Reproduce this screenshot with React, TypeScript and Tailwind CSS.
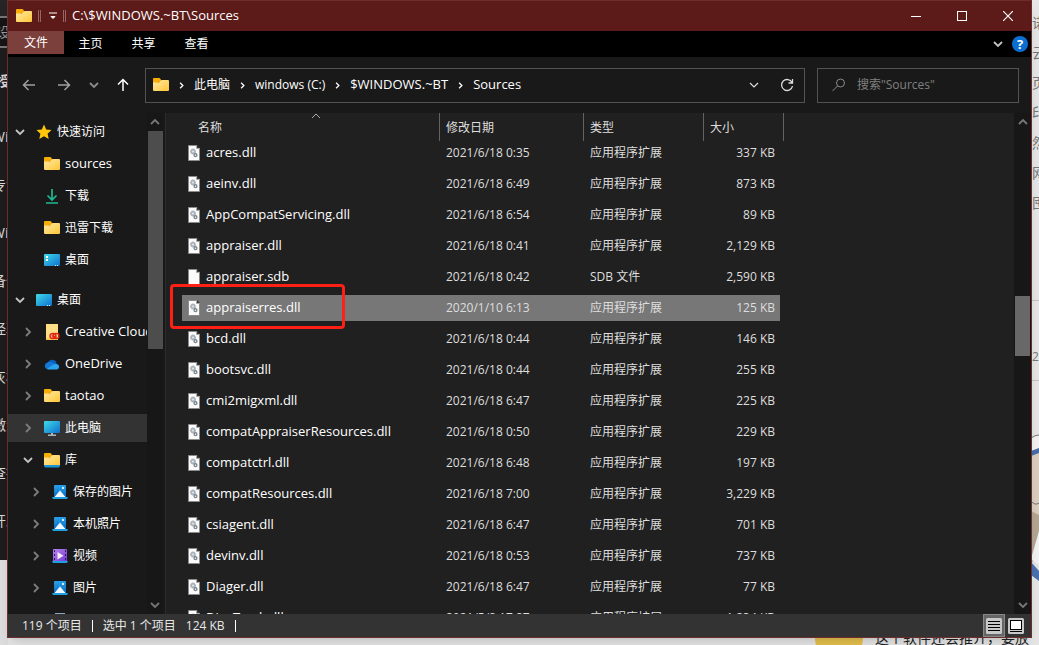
import React from 'react';

type FileRow = { name: string; date: string; type: string; size: string; selected?: boolean };

const DLL = '应用程序扩展';

const FILES: FileRow[] = [
  { name: 'acres.dll', date: '2021/6/18 0:35', type: DLL, size: '337 KB' },
  { name: 'aeinv.dll', date: '2021/6/18 6:49', type: DLL, size: '873 KB' },
  { name: 'AppCompatServicing.dll', date: '2021/6/18 6:54', type: DLL, size: '89 KB' },
  { name: 'appraiser.dll', date: '2021/6/18 0:41', type: DLL, size: '2,129 KB' },
  { name: 'appraiser.sdb', date: '2021/6/18 0:42', type: 'SDB 文件', size: '2,590 KB' },
  { name: 'appraiserres.dll', date: '2020/1/10 6:13', type: DLL, size: '125 KB', selected: true },
  { name: 'bcd.dll', date: '2021/6/18 0:44', type: DLL, size: '146 KB' },
  { name: 'bootsvc.dll', date: '2021/6/18 0:44', type: DLL, size: '255 KB' },
  { name: 'cmi2migxml.dll', date: '2021/6/18 6:47', type: DLL, size: '225 KB' },
  { name: 'compatAppraiserResources.dll', date: '2021/6/18 0:50', type: DLL, size: '229 KB' },
  { name: 'compatctrl.dll', date: '2021/6/18 6:48', type: DLL, size: '197 KB' },
  { name: 'compatResources.dll', date: '2021/6/18 7:00', type: DLL, size: '3,229 KB' },
  { name: 'csiagent.dll', date: '2021/6/18 6:47', type: DLL, size: '701 KB' },
  { name: 'devinv.dll', date: '2021/6/18 0:53', type: DLL, size: '737 KB' },
  { name: 'Diager.dll', date: '2021/6/18 6:47', type: DLL, size: '77 KB' },
  { name: 'DiagTrack.dll', date: '2021/5/8 17:27', type: DLL, size: '1,234 KB' },
];

type Kind = 'star' | 'folder' | 'download' | 'desktop' | 'desktop2' | 'cc' | 'onedrive' | 'pc' | 'library' | 'picture' | 'video' | 'doc';
type NavItem = { label: string; icon: Kind; level: 0 | 1 | 2; arrow?: 'open' | 'closed'; selected?: boolean; latin?: boolean };

const QUICK: NavItem[] = [
  { label: '快速访问', icon: 'star', level: 0, arrow: 'open' },
  { label: 'sources', icon: 'folder', level: 1, latin: true },
  { label: '下载', icon: 'download', level: 1 },
  { label: '迅雷下载', icon: 'folder', level: 1 },
  { label: '桌面', icon: 'desktop', level: 1 },
];

const TREE: NavItem[] = [
  { label: '桌面', icon: 'desktop2', level: 0, arrow: 'open' },
  { label: 'Creative Cloud Files', icon: 'cc', level: 1, arrow: 'closed', latin: true },
  { label: 'OneDrive', icon: 'onedrive', level: 1, arrow: 'closed', latin: true },
  { label: 'taotao', icon: 'folder', level: 1, arrow: 'closed', latin: true },
  { label: '此电脑', icon: 'pc', level: 1, arrow: 'closed', selected: true },
  { label: '库', icon: 'library', level: 1, arrow: 'open' },
  { label: '保存的图片', icon: 'picture', level: 2, arrow: 'closed' },
  { label: '本机照片', icon: 'picture', level: 2, arrow: 'closed' },
  { label: '视频', icon: 'video', level: 2, arrow: 'closed' },
  { label: '图片', icon: 'picture', level: 2, arrow: 'closed' },
  { label: '', icon: 'doc', level: 2 },
];

const INDENT = ['pl-[7px]', 'pl-[15px]', 'pl-[23px]'];

function Gradients() {
  return (
    <svg width="0" height="0" className="absolute" aria-hidden="true">
      <defs>
        <linearGradient id="folder" x1="0" y1="0" x2="1" y2="1">
          <stop offset="0" stopColor="#ffeaa8" />
          <stop offset="1" stopColor="#ffc636" />
        </linearGradient>
        <linearGradient id="screen" x1="0" y1="0" x2="1" y2="1">
          <stop offset="0" stopColor="#3fdbe8" />
          <stop offset="1" stopColor="#0d6fd0" />
        </linearGradient>
        <linearGradient id="photo" x1="0" y1="0" x2="0" y2="1">
          <stop offset="0" stopColor="#2aa0ea" />
          <stop offset="1" stopColor="#0766bd" />
        </linearGradient>
        <linearGradient id="film" x1="0" y1="0" x2="1" y2="1">
          <stop offset="0" stopColor="#b884f0" />
          <stop offset="1" stopColor="#7436d0" />
        </linearGradient>
      </defs>
    </svg>
  );
}

function Icon({ kind }: { kind: Kind }) {
  return (
    <svg width="16" height="16" viewBox="0 0 16 16" className="shrink-0" aria-hidden="true">
      {kind === 'star' && (
        <path d="M8 .5l2.200 5 5.300.6-3.900 3.600 1.100 5.300L8 12.300 3.300 15l1.100-5.300L.5 6.100l5.300-.6z" fill="#ffc60c" />
      )}
      {(kind === 'folder' || kind === 'library') && (
        <>
          <path d="M0 2a1 1 0 0 1 1-1h5.500L8 2.500V5L0 7z" fill="#f9ad06" />
          <path d="M0 5.500h6L8.500 3H15a1 1 0 0 1 1 1v9a1 1 0 0 1-1 1H1a1 1 0 0 1-1-1z" fill="url(#folder)" />
        </>
      )}
      {kind === 'library' && <path d="M0 13h16v1l-1 1.500H1L0 14z" fill="#1696d8" />}
      {kind === 'download' && (
        <path d="M8 1v10M3.500 7.500L8 12l4.500-4.500M2 15h12" fill="none" stroke="#1fb894" strokeWidth="1.700" />
      )}
      {(kind === 'desktop' || kind === 'desktop2') && (
        <>
          <rect y="2" width="16" height="12" rx="1" fill="url(#screen)" />
          {kind === 'desktop' && <path d="M2 4h2v2H2zM2 7h2v2H2z" fill="#fff" />}
          <path d="M11 13h1v1h-1zM13 13h1v1h-1z" fill="#d8f0ff" />
        </>
      )}
      {kind === 'cc' && (
        <>
          <path d="M2 0h12v16H2z" fill="#ffdf85" />
          <path d="M2 14h12v2H2z" fill="#f7c653" />
          <ellipse cx="9" cy="12" rx="3" ry="2.600" fill="#f7b090" stroke="#e0230f" strokeWidth="1.400" />
          <ellipse cx="12" cy="12" rx="3" ry="2.600" fill="none" stroke="#e0230f" strokeWidth="1.400" />
          <path d="M8.500 11.500l4 2" stroke="#e0230f" strokeWidth="1.200" />
        </>
      )}
      {kind === 'onedrive' && (
        <>
          <path d="M4 6.500a4.600 4.600 0 0 1 8.500 0l-2 4L4 9z" fill="#0a5fb8" />
          <path d="M4 6.200A3.700 3.700 0 0 0 2.500 13L11 8.500C9 6.200 6.200 5.700 4 6.200z" fill="#1479d6" />
          <path d="M2.500 13L9 8.800c1.300-.9 2.500-1.300 4-.9A2.900 2.900 0 0 1 13 13.500H4.500z" fill="#2ba4f0" />
        </>
      )}
      {kind === 'pc' && (
        <>
          <rect y="1" width="16" height="12" rx="1" fill="url(#screen)" />
          <path d="M7 13h2v1.500h3V16H4v-1.500h3z" fill="#a9b4bd" />
        </>
      )}
      {kind === 'picture' && (
        <>
          <rect x="2" y="1" width="12" height="13" rx="1" fill="url(#photo)" />
          <path d="M2.500 13L8 6.500l5.500 6.500z" fill="#eef8ff" />
          <rect x="10" y="3" width="2" height="2" fill="#d5edff" />
          <path d="M0 13h16l-1 2H1z" fill="#1f9fe3" />
        </>
      )}
      {kind === 'video' && (
        <>
          <rect x="1" y="1" width="14" height="13" rx="1" fill="url(#film)" />
          <path d="M2 2h1v2H2zM2 6h1v2H2zM2 10h1v2H2zM13 2h1v2h-1zM13 6h1v2h-1zM13 10h1v2h-1z" fill="#35156b" />
          <path d="M5.500 4v7.500L11.500 7.800z" fill="#f5edff" />
          <path d="M0 13h16l-1 2H1z" fill="#1f9fe3" />
        </>
      )}
      {kind === 'doc' && <path d="M3 1h10v14H3z" fill="#8aa5bd" />}
    </svg>
  );
}

function FileIcon({ gears }: { gears: boolean }) {
  return (
    <svg width="12" height="16" viewBox="0 0 12 16" className="shrink-0" aria-hidden="true">
      <path d="M.5.5h8l3 3v12H.5z" fill="#fbfbfb" stroke="#8b8b8b" />
      <path d="M9 0v3h3z" fill="#3a3a3a" />
      <path d="M8.500.5v3h3" fill="none" stroke="#a5a5a5" />
      {gears && (
        <>
          <circle cx="5" cy="6.500" r="2" fill="#dfe6ea" stroke="#aab3ba" strokeWidth="1.800" />
          <circle cx="7.500" cy="10.200" r="1.400" fill="#fff" stroke="#7c868d" strokeWidth="1.400" />
        </>
      )}
    </svg>
  );
}

function Chevron({ dir, className = '' }: { dir: 'up' | 'down' | 'right'; className?: string }) {
  const paths = {
    up: 'M1 7l4-4 4 4',
    down: 'M1 3l4 4 4-4',
    right: 'M3 1l4 4-4 4',
  };
  return (
    <svg width="10" height="10" viewBox="0 0 10 10" className={`shrink-0 ${className}`} aria-hidden="true">
      <path d={paths[dir]} fill="none" stroke="currentColor" strokeWidth="1.800" />
    </svg>
  );
}

function NavRow({ item }: { item: NavItem }) {
  return (
    <li className="h-8 flex items-center">
      <button
        className={`w-full h-7 flex items-center overflow-hidden whitespace-nowrap ${INDENT[item.level]} ${item.selected ? 'bg-[#333333]' : ''}`}
      >
        <span className="w-[11px] shrink-0 flex">
          {item.arrow === 'open' && <Chevron dir="down" className="text-[#c4c4c4]" />}
          {item.arrow === 'closed' && <Chevron dir="right" className="text-[#7d7d7d]" />}
        </span>
        <span className="ml-[10px] mr-[5px] flex">
          <Icon kind={item.icon} />
        </span>
        <span className={item.latin ? 'text-[13px]' : 'text-xs'}>{item.label}</span>
      </button>
    </li>
  );
}

function Crumb({ label, size = 'text-xs' }: { label: string; size?: string }) {
  return (
    <>
      <Chevron dir="right" className="mx-[9px] w-[7px] h-[7px]" />
      <button className={`whitespace-nowrap ${size}`}>{label}</button>
    </>
  );
}

// Whatever is open behind the explorer window and peeks out at its edges.
function Backdrop() {
  const left = ['Win', '专注', 'Win', '备份', '经验', '灰机', '激活', '查找', '开发'];
  const right = ['诺', '云', '页', '印', '然', '网', '囤'];
  return (
    <div className="absolute inset-0 flex justify-between bg-[#dedede] overflow-hidden" aria-hidden="true">
      <div className="w-2 overflow-hidden whitespace-nowrap text-sm text-[#d8d8d8]">
        <div className="h-[560px] bg-[#1d1d1d]">
          <div className="h-4 bg-[#252525]" />
          <div className="h-8 flex items-center border-y-2 border-[#777] bg-[#151515] text-[#999]">
            <span className="-ml-1">设</span>
          </div>
          <div className="h-[65px] flex items-center font-bold">
            <span className="-ml-1">授</span>
          </div>
          {left.map((t, i) => (
            <div key={i} className="h-12 flex items-center">
              <span className="-ml-2">{t}</span>
            </div>
          ))}
        </div>
      </div>
      <div className="flex-1 self-end h-[7px] flex overflow-hidden bg-[#e6e6e6] pl-[807px]">
        <div className="w-12 h-6 rounded-b-full bg-[#e6c14c] shrink-0" />
        <div className="ml-3 -mt-2 text-sm leading-4 text-[#222] whitespace-nowrap">这个软件还会推介，要放下</div>
      </div>
      <div className="w-2 overflow-hidden bg-[#e6e6e6] text-sm text-[#777] pt-2">
        {right.map((t) => (
          <div key={t} className="h-[30px] flex items-center pl-px">{t}</div>
        ))}
        <div className="h-[83px] border-b border-[#c4c4c4]" />
        <div className="h-20 border-b border-[#c4c4c4] text-xs pt-12 pl-px">2</div>
        <svg width="8" height="230" viewBox="0 0 8 230">
          <path d="M0 57Q4 54 8 54V70L0 72z" fill="#f3f3f3" />
          <path d="M0 72l8-3v84H0z" fill="#d9cec0" />
          <path d="M0 57Q4 54 8 54M0 120Q4 125 8 122" fill="none" stroke="#777" />
          <path d="M0 70l8-3v5l-8 3z" fill="#476da8" />
          <path d="M0 130l8 4v22l-8 30z" fill="#b3a793" />
          <path d="M8 150v34l-8-6z" fill="#f3f3f3" />
          <path d="M0 181l8 9v10l-8-6z" fill="#4b70ad" />
        </svg>
      </div>
    </div>
  );
}

export default function App() {
  return (
    <div className="relative h-screen overflow-hidden flex font-['Open_Sans','Noto_Sans_CJK_SC',sans-serif] text-xs text-white">
      <Gradients />
      <Backdrop />
      <div className="relative flex-1 min-w-0 mx-[7px] mb-[7px] flex flex-col bg-[#191919] border border-[#6b2d2d] shadow-lg">
        <header className="h-[30px] shrink-0 flex items-center bg-[#5c1a18] pl-2">
          <Icon kind="folder" />
          <span className="ml-[6px] w-[3px] h-3 border-x border-[#966766]" />
          <button className="ml-2" aria-label="自定义快速访问工具栏">
            <svg width="8" height="8" viewBox="0 0 8 8">
              <path d="M0 1h8M2 4.500h4L4 6.500z" fill="#fff" stroke="#fff" strokeWidth="1" />
            </svg>
          </button>
          <span className="ml-[6px] w-[3px] h-3 border-x border-[#966766]" />
          <h1 className="ml-[6px] flex-1 text-[13px]">C:\$WINDOWS.~BT\Sources</h1>
          <button className="w-[46px] h-full flex items-center justify-center" aria-label="最小化">
            <svg width="10" height="10"><path d="M0 5.500h10" stroke="#fff" /></svg>
          </button>
          <button className="w-[46px] h-full flex items-center justify-center" aria-label="最大化">
            <svg width="10" height="10"><rect x=".5" y=".5" width="9" height="9" fill="none" stroke="#fff" /></svg>
          </button>
          <button className="w-[46px] h-full flex items-center justify-center" aria-label="关闭">
            <svg width="10" height="10"><path d="M0 0l10 10M10 0L0 10" stroke="#fff" strokeWidth="1.200" /></svg>
          </button>
        </header>

        <nav className="h-[26px] shrink-0 flex items-start bg-black pr-[3px]">
          <button className="w-14 h-[23px] bg-[#7b403c]">文件</button>
          <button className="w-[53px] h-[26px]">主页</button>
          <button className="w-[53px] h-[26px]">共享</button>
          <button className="w-[53px] h-[26px]">查看</button>
          <button className="ml-auto h-[26px] mr-[9px]" aria-label="展开功能区">
            <Chevron dir="down" className="text-[#c4c4c4]" />
          </button>
          <button className="mt-[5px] w-4 h-4 rounded-full bg-[#0a6fd0] text-[13px] leading-4 font-bold" aria-label="帮助">?</button>
        </nav>

        <div className="h-14 shrink-0 flex items-center pl-[14px] pr-3">
          <div className="flex items-center">
            <button aria-label="后退">
              <svg width="14" height="14" viewBox="0 0 14 14"><path d="M13 7H1.500M6.500 2l-5 5 5 5" fill="none" stroke="#a0a0a0" strokeWidth="1.500" /></svg>
            </button>
            <button className="ml-[21px]" aria-label="前进">
              <svg width="14" height="14" viewBox="0 0 14 14"><path d="M1 7h11.500M7.500 2l5 5-5 5" fill="none" stroke="#a0a0a0" strokeWidth="1.500" /></svg>
            </button>
            <button className="ml-[18px]" aria-label="最近位置">
              <Chevron dir="down" className="text-[#8c8c8c]" />
            </button>
            <button className="ml-[17px] mr-[15px]" aria-label="上移">
              <svg width="14" height="14" viewBox="0 0 14 14"><path d="M7 13V1.500M2 6.500l5-5 5 5" fill="none" stroke="#fff" strokeWidth="1.500" /></svg>
            </button>
          </div>
          <div className="flex-1 h-[35px] flex items-center border border-[#535353] pl-[7px] pr-[10px]">
            <Icon kind="folder" />
            <Crumb label="此电脑" />
            <Crumb label="windows (C:)" />
            <Crumb label="$WINDOWS.~BT" size="text-[13px]" />
            <Crumb label="Sources" size="text-[13px]" />
            <button className="ml-auto mr-[21px]" aria-label="以前的位置">
              <svg width="10" height="10" viewBox="0 0 10 10"><path d="M1 3l4 4 4-4" fill="none" stroke="#ddd" strokeWidth="1.200" /></svg>
            </button>
            <button aria-label="刷新">
              <svg width="14" height="14" viewBox="0 0 14 14">
                <path d="M12 4.500A5.500 5.500 0 1 0 12.500 8M12.500 1v4h-4" fill="none" stroke="#ddd" strokeWidth="1.300" />
              </svg>
            </button>
          </div>
          <label className="ml-3 w-[202px] h-[35px] flex items-center border border-[#535353] pl-[14px]">
            <svg width="14" height="14" viewBox="0 0 14 14" aria-hidden="true">
              <circle cx="8.500" cy="5" r="4" fill="none" stroke="#8a8a8a" />
              <path d="M5.500 8L.5 13" stroke="#8a8a8a" />
            </svg>
            <input
              className="ml-[11px] w-36 bg-transparent outline-none placeholder:text-[#808080]"
              placeholder={'搜索"Sources"'}
              aria-label="搜索"
            />
          </label>
        </div>

        <div className="flex-1 min-h-0 flex">
          <aside className="w-[139px] shrink-0 overflow-hidden pt-[3px]">
            <ul>
              {QUICK.map((item) => <NavRow key={item.label} item={item} />)}
            </ul>
            <ul className="mt-2">
              {TREE.map((item) => <NavRow key={item.label} item={item} />)}
            </ul>
          </aside>
          <div className="w-4 shrink-0 flex flex-col items-center bg-[#171717]">
            <Chevron dir="up" className="my-1 text-[#777]" />
            <div className="w-[15px] flex-[218] bg-[#4d4d4d]" />
            <div className="flex-[246]" />
            <Chevron dir="down" className="my-1 text-[#777]" />
          </div>

          <main className="flex-1 min-w-0 flex ml-[2px] border-l border-[#2b2b2b] bg-[#202020]">
            <div className="relative flex-1 min-w-0 overflow-hidden pl-4">
              <table className="table-fixed w-[602px] border-collapse text-left">
                <thead>
                  <tr className="h-6 align-top text-[#dedede]">
                    <th className="w-[258px] p-0 font-normal">
                      <button className="relative w-full h-7 -mb-1 pt-[2px] pl-4 text-left border-r border-[#636363] block">
                        名称
                        <span className="absolute -top-1 left-1/2"><svg width="10" height="10" viewBox="0 0 10 10"><path d="M1 9l4-4 4 4" fill="none" stroke="#aaa" /></svg></span>
                      </button>
                    </th>
                    <th className="w-36 p-0 font-normal">
                      <button className="w-full h-7 -mb-1 pt-[2px] pl-[6px] text-left border-r border-[#636363] block">修改日期</button>
                    </th>
                    <th className="w-[120px] p-0 font-normal">
                      <button className="w-full h-7 -mb-1 pt-[2px] pl-[6px] text-left border-r border-[#636363] block">类型</button>
                    </th>
                    <th className="w-20 p-0 font-normal">
                      <button className="w-full h-7 -mb-1 pt-[2px] pl-[6px] text-left border-r border-[#636363] block">大小</button>
                    </th>
                  </tr>
                </thead>
                <tbody>
                  {FILES.map((f) => {
                    const bg = f.selected ? 'bg-[#777777]' : '';
                    return (
                      <tr key={f.name} className="h-[31px]">
                        <td className="p-0">
                          <div className={`h-[26px] flex items-center pl-[6px] gap-[6px] text-[13px] ${bg}`}>
                            <FileIcon gears={f.type === DLL} />
                            {f.name}
                          </div>
                        </td>
                        <td className="p-0 text-[#dedede]">
                          <div className={`h-[26px] flex items-center pl-[6px] ${bg}`}>{f.date}</div>
                        </td>
                        <td className="p-0 text-[#dedede]">
                          <div className={`h-[26px] flex items-center pl-[6px] ${bg}`}>{f.type}</div>
                        </td>
                        <td className="p-0 pr-1 text-[#dedede]">
                          <div className={`h-[26px] flex items-center justify-end pr-[5px] ${bg}`}>{f.size}</div>
                        </td>
                      </tr>
                    );
                  })}
                </tbody>
              </table>
              <div className="absolute left-1 top-[171px] w-[175px] h-[45px] rounded-sm border-3 border-[#ff2015]" />
            </div>
            <div className="w-[17px] shrink-0 flex flex-col items-center bg-[#171717]">
              <Chevron dir="up" className="my-1 text-[#777]" />
              <div className="flex-[165]" />
              <div className="w-[15px] flex-[60] bg-[#686868]" />
              <div className="flex-[240]" />
              <Chevron dir="down" className="my-1 text-[#777]" />
            </div>
          </main>
        </div>

        <footer className="h-[23px] shrink-0 flex items-center bg-[#333333] pl-[14px] pr-[7px] text-[#e8e8e8]">
          <span>119 个项目</span>
          <span className="mx-[10px] w-px h-3 bg-white" />
          <span>选中 1 个项目</span>
          <span className="ml-[10px]">124 KB</span>
          <span className="mx-[10px] w-px h-3 bg-white" />
          <button className="ml-auto w-[22px] h-[23px] flex items-center justify-center border border-[#888] bg-[#666]" aria-label="详细信息">
            <svg width="16" height="16" viewBox="0 0 16 16">
              <rect width="16" height="16" rx="1.500" fill="#c8c8c8" />
              <path d="M2 3.500h12M2 6.500h12M2 9.500h12M2 12.500h12" stroke="#000" />
            </svg>
          </button>
          <button className="ml-[3px]" aria-label="大图标">
            <svg width="16" height="16" viewBox="0 0 16 16">
              <rect width="16" height="16" rx="1.500" fill="#c8c8c8" />
              <rect x="2.500" y="2.500" width="11" height="9" fill="#fff" stroke="#000" />
              <path d="M2 13.500h12" stroke="#000" />
            </svg>
          </button>
        </footer>
      </div>
    </div>
  );
}
